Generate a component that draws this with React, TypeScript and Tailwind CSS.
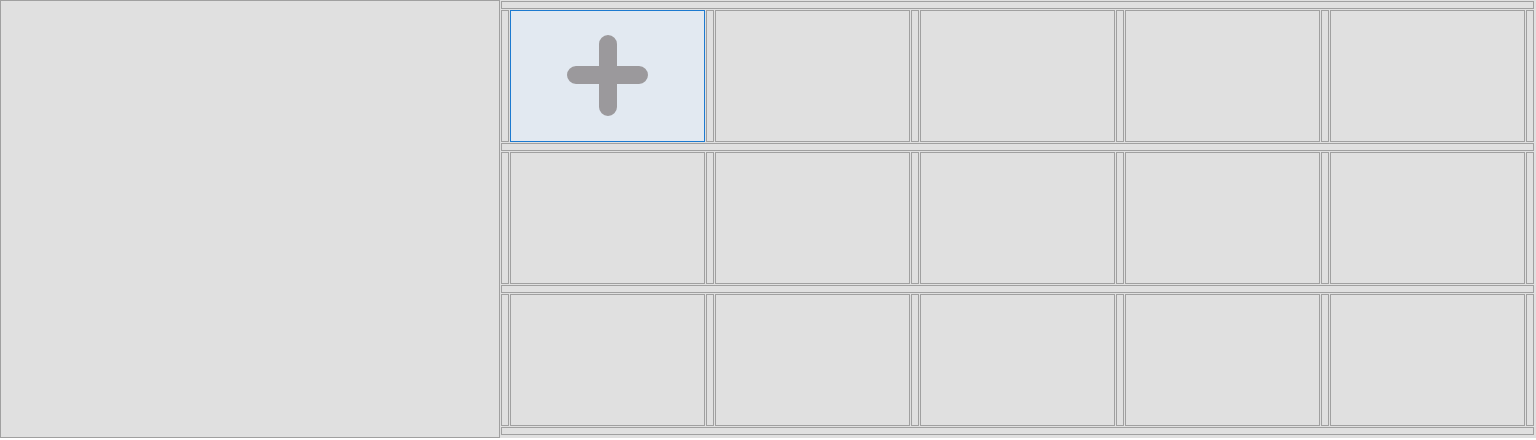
import React from "react";

function Handle() {
  return <div className="w-[8px] shrink-0 border border-[#a0a0a0] bg-[#e0e0e0]" />;
}

function Bar() {
  return <div className="h-[8px] shrink-0 border border-[#a0a0a0] bg-[#e0e0e0]" />;
}

function Cell({ active }: { active?: boolean }) {
  if (active) {
    return (
      <div className="flex w-[195px] shrink-0 items-center justify-center border border-[#1c7ad0] bg-[#e2e9f1]">
        <svg width="82" height="82" viewBox="0 0 82 82">
          <path d="M41 9 V72 M9 40 H72" stroke="#9b999c" strokeWidth="18" strokeLinecap="round" fill="none" />
        </svg>
      </div>
    );
  }
  return <div className="w-[195px] shrink-0 border border-[#a0a0a0] bg-[#e0e0e0]" />;
}

function Row({ first }: { first?: boolean }) {
  return (
    <div className="flex h-[132px] shrink-0 gap-px">
      {[0, 1, 2, 3, 4].map((i) => (
        <React.Fragment key={i}>
          <Handle />
          <Cell active={first && i === 0} />
        </React.Fragment>
      ))}
      <Handle />
    </div>
  );
}

export default function App() {
  return (
    <div className="flex h-[440px] w-[1536px] items-start bg-white">
      <div className="h-[438px] w-[500px] shrink-0 border border-[#a0a0a0] bg-[#e0e0e0]" />
      <div className="flex h-[438px] w-[1036px] flex-col gap-px bg-[#e0e0e0] pt-px pr-[2px] pl-px">
        <Bar />
        <Row first />
        <Bar />
        <Row />
        <Bar />
        <Row />
        <Bar />
      </div>
    </div>
  );
}
